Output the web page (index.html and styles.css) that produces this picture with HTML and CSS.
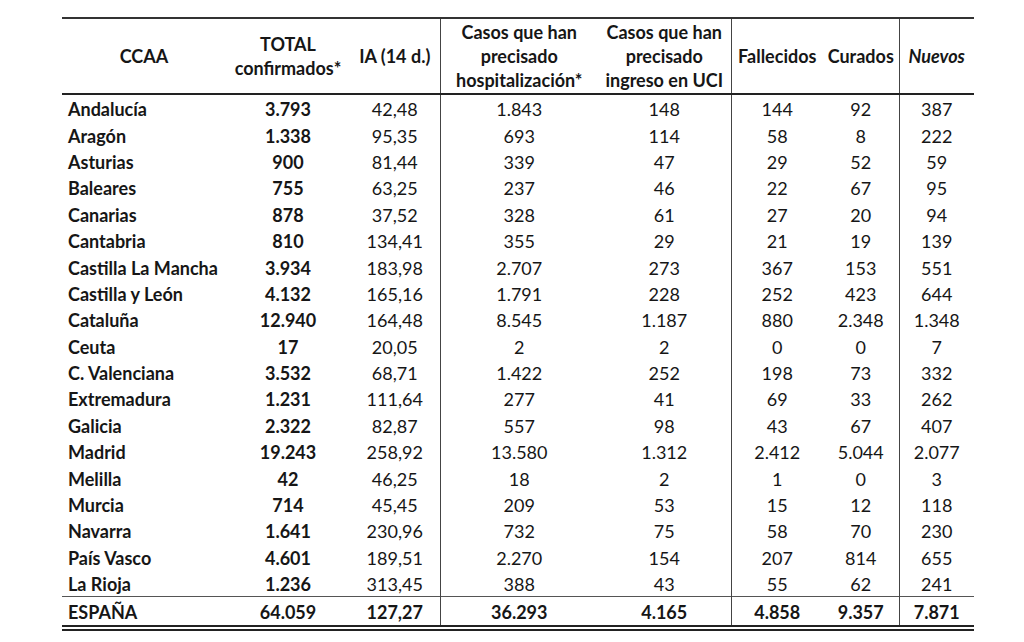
FILE: index.html
```html
<!DOCTYPE html>
<html lang="es">
<head>
  <meta charset="UTF-8" />
  <title>Casos COVID-19 por CCAA</title>
  <link rel="stylesheet" href="styles.css">
</head>
<body>

  <table class="casos">
    <colgroup>
      <col class="c-ccaa">
      <col class="c-total">
      <col class="c-ia">
      <col class="c-hosp">
      <col class="c-uci">
      <col class="c-fall">
      <col class="c-cur">
      <col class="c-nuevos">
    </colgroup>
    <thead>
      <tr>
        <th>CCAA</th>
        <th>TOTAL<br>confirmados*</th>
        <th class="sep">IA (14 d.)</th>
        <th>Casos que han<br>precisado<br>hospitalización*</th>
        <th class="sep">Casos que han<br>precisado<br>ingreso en UCI</th>
        <th>Fallecidos</th>
        <th class="sep">Curados</th>
        <th><em>Nuevos</em></th>
      </tr>
    </thead>
    <tbody>
      <tr><td class="name">Andalucía</td><td class="tot">3.793</td><td class="sep">42,48</td><td>1.843</td><td class="sep">148</td><td>144</td><td class="sep">92</td><td>387</td></tr>
      <tr><td class="name">Aragón</td><td class="tot">1.338</td><td class="sep">95,35</td><td>693</td><td class="sep">114</td><td>58</td><td class="sep">8</td><td>222</td></tr>
      <tr><td class="name">Asturias</td><td class="tot">900</td><td class="sep">81,44</td><td>339</td><td class="sep">47</td><td>29</td><td class="sep">52</td><td>59</td></tr>
      <tr><td class="name">Baleares</td><td class="tot">755</td><td class="sep">63,25</td><td>237</td><td class="sep">46</td><td>22</td><td class="sep">67</td><td>95</td></tr>
      <tr><td class="name">Canarias</td><td class="tot">878</td><td class="sep">37,52</td><td>328</td><td class="sep">61</td><td>27</td><td class="sep">20</td><td>94</td></tr>
      <tr><td class="name">Cantabria</td><td class="tot">810</td><td class="sep">134,41</td><td>355</td><td class="sep">29</td><td>21</td><td class="sep">19</td><td>139</td></tr>
      <tr><td class="name">Castilla La Mancha</td><td class="tot">3.934</td><td class="sep">183,98</td><td>2.707</td><td class="sep">273</td><td>367</td><td class="sep">153</td><td>551</td></tr>
      <tr><td class="name">Castilla y León</td><td class="tot">4.132</td><td class="sep">165,16</td><td>1.791</td><td class="sep">228</td><td>252</td><td class="sep">423</td><td>644</td></tr>
      <tr><td class="name">Cataluña</td><td class="tot">12.940</td><td class="sep">164,48</td><td>8.545</td><td class="sep">1.187</td><td>880</td><td class="sep">2.348</td><td>1.348</td></tr>
      <tr><td class="name">Ceuta</td><td class="tot">17</td><td class="sep">20,05</td><td>2</td><td class="sep">2</td><td>0</td><td class="sep">0</td><td>7</td></tr>
      <tr><td class="name">C. Valenciana</td><td class="tot">3.532</td><td class="sep">68,71</td><td>1.422</td><td class="sep">252</td><td>198</td><td class="sep">73</td><td>332</td></tr>
      <tr><td class="name">Extremadura</td><td class="tot">1.231</td><td class="sep">111,64</td><td>277</td><td class="sep">41</td><td>69</td><td class="sep">33</td><td>262</td></tr>
      <tr><td class="name">Galicia</td><td class="tot">2.322</td><td class="sep">82,87</td><td>557</td><td class="sep">98</td><td>43</td><td class="sep">67</td><td>407</td></tr>
      <tr><td class="name">Madrid</td><td class="tot">19.243</td><td class="sep">258,92</td><td>13.580</td><td class="sep">1.312</td><td>2.412</td><td class="sep">5.044</td><td>2.077</td></tr>
      <tr><td class="name">Melilla</td><td class="tot">42</td><td class="sep">46,25</td><td>18</td><td class="sep">2</td><td>1</td><td class="sep">0</td><td>3</td></tr>
      <tr><td class="name">Murcia</td><td class="tot">714</td><td class="sep">45,45</td><td>209</td><td class="sep">53</td><td>15</td><td class="sep">12</td><td>118</td></tr>
      <tr><td class="name">Navarra</td><td class="tot">1.641</td><td class="sep">230,96</td><td>732</td><td class="sep">75</td><td>58</td><td class="sep">70</td><td>230</td></tr>
      <tr><td class="name">País Vasco</td><td class="tot">4.601</td><td class="sep">189,51</td><td>2.270</td><td class="sep">154</td><td>207</td><td class="sep">814</td><td>655</td></tr>
      <tr><td class="name">La Rioja</td><td class="tot">1.236</td><td class="sep">313,45</td><td>388</td><td class="sep">43</td><td>55</td><td class="sep">62</td><td>241</td></tr>
    </tbody>
    <tfoot>
      <tr><td class="name">ESPAÑA</td><td>64.059</td><td class="sep">127,27</td><td>36.293</td><td class="sep">4.165</td><td>4.858</td><td class="sep">9.357</td><td>7.871</td></tr>
    </tfoot>
  </table>

</body>
</html>
```

FILE: styles.css
```css
body {
  margin: 0;
  background: #fff;
  color: #161616;
  font-family: 'Lato', 'Open Sans', sans-serif;
  font-size: 18px;
}

.casos {
  border-collapse: collapse;
  table-layout: fixed;
  width: 912px;
  margin: 17px 0 0 62px;
  border-top: 2px solid #333;
}

.c-ccaa { width: 164px; }
.c-total { width: 124px; }
.c-ia { width: 90px; }
.c-hosp { width: 158px; }
.c-uci { width: 133px; }
.c-fall { width: 92px; }
.c-cur { width: 76px; }
.c-nuevos { width: 75px; }

th, td {
  padding: 0;
  text-align: center;
  white-space: nowrap;
}

th {
  height: 74px;
  line-height: 24px;
  font-weight: bold;
  border-bottom: 2px solid #222;
}

th em {
  font-style: italic;
}

td {
  height: 24.4px;
  padding-top: 2px;
  line-height: 24px;
}

.sep {
  border-right: 1px solid #444;
}

td.name {
  text-align: left;
  padding-left: 6px;
  font-weight: bold;
}

td.tot {
  font-weight: bold;
}

tfoot td {
  height: 26px;
  font-weight: bold;
  border-top: 1px solid #555;
  border-bottom: 6px double #222;
}
```
